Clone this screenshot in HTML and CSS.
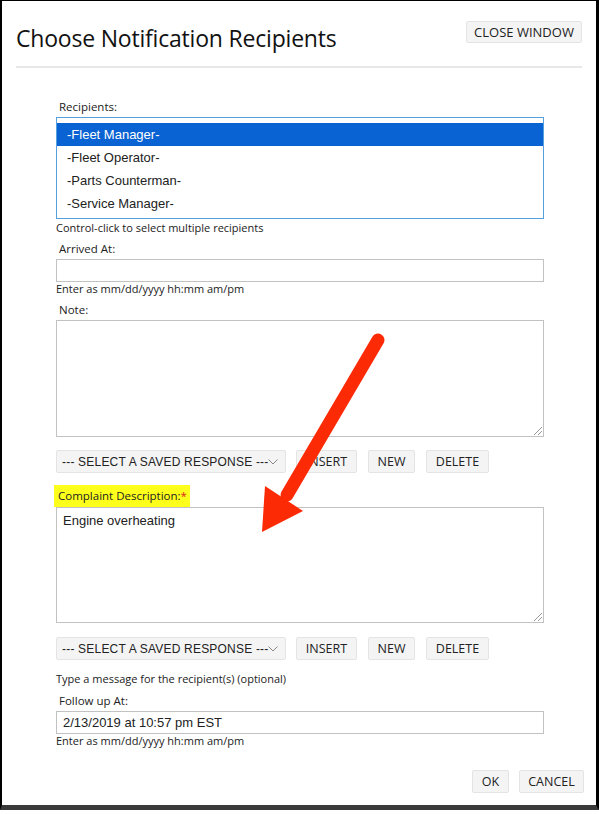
FILE: index.html
```html
<!DOCTYPE html>
<html lang="en">
  <head>
    <meta charset="UTF-8" />
    <meta name="viewport" content="width=device-width, initial-scale=1.0" />
    <title>Choose Notification Recipients</title>
    <link rel="stylesheet" href="styles.css">
  </head>
  <body>
    <div class="dialog">
      <div class="dialog-head">
        <h1>Choose Notification Recipients</h1>
        <button class="btn close-btn">CLOSE WINDOW</button>
      </div>

      <div class="form">
        <div class="label first">Recipients:</div>
        <div class="listbox">
          <div class="option selected">-Fleet Manager-</div>
          <div class="option">-Fleet Operator-</div>
          <div class="option">-Parts Counterman-</div>
          <div class="option">-Service Manager-</div>
        </div>
        <div class="hint spaced">Control-click to select multiple recipients</div>

        <div class="label">Arrived At:</div>
        <div class="input"></div>
        <div class="hint">Enter as mm/dd/yyyy hh:mm am/pm</div>

        <div class="label">Note:</div>
        <div class="textarea note"><span class="grip"></span></div>

        <div class="response-row">
          <div class="saved-select">
            <span class="saved-text">--- SELECT A SAVED RESPONSE ---</span>
            <svg class="chevron" width="10" height="6" viewBox="0 0 10 6"><path d="M0.5 0.5 L5 5 L9.5 0.5" fill="none" stroke="#888" stroke-width="1"/></svg>
          </div>
          <button class="btn insert-btn">INSERT</button>
          <button class="btn new-btn">NEW</button>
          <button class="btn delete-btn">DELETE</button>
        </div>

        <div class="label hl">Complaint Description:<span class="req">*</span></div>
        <div class="textarea complaint">Engine overheating<span class="grip"></span></div>

        <div class="response-row">
          <div class="saved-select">
            <span class="saved-text">--- SELECT A SAVED RESPONSE ---</span>
            <svg class="chevron" width="10" height="6" viewBox="0 0 10 6"><path d="M0.5 0.5 L5 5 L9.5 0.5" fill="none" stroke="#888" stroke-width="1"/></svg>
          </div>
          <button class="btn insert-btn">INSERT</button>
          <button class="btn new-btn">NEW</button>
          <button class="btn delete-btn">DELETE</button>
        </div>

        <div class="message">Type a message for the recipient(s) (optional)</div>
        <div class="label">Follow up At:</div>
        <div class="input">2/13/2019 at 10:57 pm EST</div>
        <div class="hint">Enter as mm/dd/yyyy hh:mm am/pm</div>
      </div>

      <div class="actions">
        <button class="btn ok-btn">OK</button>
        <button class="btn cancel-btn">CANCEL</button>
      </div>
    </div>

    <!-- annotation arrow drawn over the form -->
    <svg class="arrow" width="599" height="814" viewBox="0 0 599 814">
      <line x1="378" y1="340" x2="287" y2="495" stroke="#fd2a06" stroke-width="13" stroke-linecap="round"/>
      <polygon points="262,532 265,486 303,511" fill="#fd2a06"/>
    </svg>
  </body>
</html>
```

FILE: styles.css
```css
body {
  margin: 0;
  background: #fff;
  font-family: "Open Sans", "Liberation Sans", sans-serif;
  color: #222;
}
.dialog {
  width: 594px;
  border-left: 2px solid #000;
  border-right: 3px solid #000;
  border-top: 1px solid #000;
  border-bottom: 5px solid #3a3a3a;
  background: #fff;
}
.dialog-head {
  display: flex;
  justify-content: space-between;
  align-items: flex-start;
  margin: 0 14px;
  height: 65px;
  border-bottom: 2px solid #e8e8e8;
}
.dialog-head h1 {
  margin: 22px 0 0 0;
  font-size: 23px;
  line-height: 30px;
  font-weight: 400;
  color: #111;
  letter-spacing: -0.2px;
}
.btn {
  height: 23px;
  padding: 0;
  background: #f4f4f4;
  border: 1px solid #e4e4e4;
  border-radius: 2px;
  font-family: "Open Sans", "Liberation Sans", sans-serif;
  font-size: 12.5px;
  color: #222;
}
.close-btn {
  margin-top: 20px;
  height: 22px;
  width: 116px;
  font-size: 13px;
}
.insert-btn {
  width: 61px;
}
.new-btn {
  width: 47px;
}
.delete-btn {
  width: 63px;
}
.ok-btn {
  width: 37px;
}
.cancel-btn {
  width: 65px;
}
.form {
  padding: 0 52px 0 54px;
}
.label {
  font-size: 11.5px;
  line-height: 14px;
  padding-left: 3px;
  margin-top: 7px;
  margin-bottom: 3px;
}
.label.first {
  margin-top: 32px;
}
.label.hl {
  width: fit-content;
  background: #ffff1c;
  margin: 12px 0 0 -2px;
  padding: 4px 3px 4px 4px;
}
.req {
  color: #e02020;
}
.hint {
  font-size: 11px;
  line-height: 14px;
}
.hint.spaced {
  margin-top: 2px;
}
.listbox {
  border: 1px solid #56a0e0;
  padding-top: 5px;
  box-sizing: border-box;
  height: 102px;
  overflow: hidden;
  font-family: "Liberation Sans", Arial, sans-serif;
  font-size: 13px;
}
.option {
  height: 23px;
  line-height: 23px;
  padding-left: 10px;
  color: #222;
}
.option.selected {
  background: #0a63d2;
  color: #fff;
}
.input {
  height: 23px;
  box-sizing: border-box;
  border: 1px solid #c2c2c2;
  padding-left: 6px;
  font-family: "Liberation Sans", Arial, sans-serif;
  font-size: 13px;
  line-height: 21px;
}
.textarea {
  position: relative;
  box-sizing: border-box;
  border: 1px solid #c2c2c2;
  padding: 5px 6px;
  font-family: "Liberation Sans", Arial, sans-serif;
  font-size: 13px;
  line-height: 15px;
}
.textarea.note {
  height: 117px;
}
.textarea.complaint {
  height: 116px;
}
.grip {
  position: absolute;
  right: 1px;
  bottom: 1px;
  width: 8px;
  height: 8px;
  background: linear-gradient(135deg, transparent 45%, #999 45%, #999 52%, transparent 52%, transparent 70%, #999 70%, #999 77%, transparent 77%);
}
.response-row {
  display: flex;
  gap: 10px;
  margin-top: 13px;
  margin-bottom: 12px;
}
.response-row .new-btn,
.response-row .delete-btn {
  margin-left: 1px;
}
.complaint + .response-row {
  margin-top: 14px;
}
.saved-select {
  width: 230px;
  height: 23px;
  box-sizing: border-box;
  display: flex;
  align-items: center;
  padding: 0 8px 0 5px;
  background: #f4f4f4;
  border: 1px solid #e4e4e4;
  border-radius: 2px;
  font-family: "Liberation Sans", Arial, sans-serif;
  font-size: 12px;
  letter-spacing: 0.2px;
  color: #222;
}
.saved-text {
  flex: 1;
  white-space: nowrap;
}
.chevron {
  flex: none;
}
.message {
  font-size: 11px;
  line-height: 14px;
}
.message + .label {
  margin-top: 8px;
}
.actions {
  display: flex;
  justify-content: flex-end;
  gap: 10px;
  padding: 22px 12px 12px 0;
}
.arrow {
  position: absolute;
  left: 0;
  top: 0;
  pointer-events: none;
}
```
